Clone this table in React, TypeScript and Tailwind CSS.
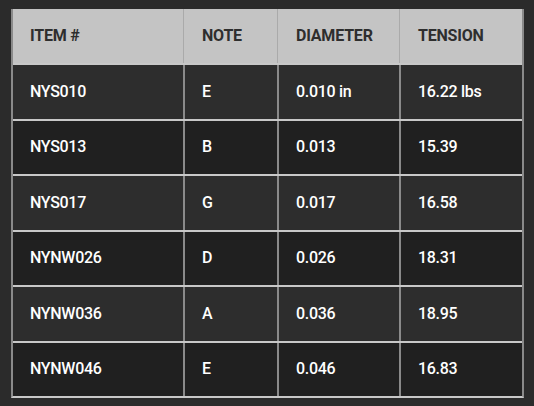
import React from "react";

const rows = [
  ["NYS010", "E", "0.010 in", "16.22 lbs"],
  ["NYS013", "B", "0.013", "15.39"],
  ["NYS017", "G", "0.017", "16.58"],
  ["NYNW026", "D", "0.026", "18.31"],
  ["NYNW036", "A", "0.036", "18.95"],
  ["NYNW046", "E", "0.046", "16.83"],
];

const cols = "grid grid-cols-[170px_94px_122px_123px]";

export default function App() {
  return (
    <div
      className="w-[534px] h-[406px] bg-[#2b2b2b] pt-[9px] pl-[11px]"
      style={{ fontFamily: 'Roboto, "Liberation Sans", Arial, sans-serif' }}
    >
      <div className="w-[509px] border-l-2 border-r-2 border-b-2 border-l-[#8a8a8a] border-r-[#8a8a8a] border-b-[#c8c8c8] box-content">
        <div className={`${cols} h-[54px] bg-[#c4c4c4] text-[#2e2e2e] text-[16px] font-bold tracking-[-0.2px]`}>
          {["ITEM #", "NOTE", "DIAMETER", "TENSION"].map((h, i) => (
            <div
              key={h}
              className={`flex items-center ${i > 0 ? "border-l border-[#aaaaaa] pl-[18px]" : "pl-[17px]"}`}
            >
              {h}
            </div>
          ))}
        </div>
        {rows.map((r, ri) => (
          <div
            key={ri}
            className={`${cols} h-[55.5px] border-t-2 border-[#c8c8c8] text-white text-[16px] font-medium tracking-[-0.3px] ${
              ri % 2 === 0 ? "bg-[#2d2d2d]" : "bg-[#202020]"
            }`}
          >
            {r.map((c, i) => (
              <div
                key={i}
                className={`flex items-center ${i > 0 ? "border-l-2 border-[#8a8a8a] pl-[17px]" : "pl-[17px]"}`}
              >
                {c}
              </div>
            ))}
          </div>
        ))}
      </div>
    </div>
  );
}
